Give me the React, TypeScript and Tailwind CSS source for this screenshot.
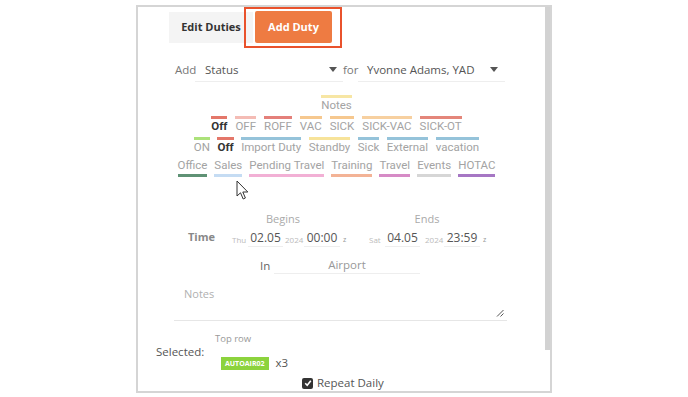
import React from "react";

type S = { label: string; bar: string; bold?: boolean };

const row1: S[] = [
  { label: "Off", bar: "#e4776a", bold: true },
  { label: "OFF", bar: "#f4bcb5" },
  { label: "ROFF", bar: "#e4807a" },
  { label: "VAC", bar: "#f6c88f" },
  { label: "SICK", bar: "#f6c88f" },
  { label: "SICK-VAC", bar: "#f7d0a0" },
  { label: "SICK-OT", bar: "#e4867a" },
];
const row2: S[] = [
  { label: "ON", bar: "#ace27a" },
  { label: "Off", bar: "#e4776a", bold: true },
  { label: "Import Duty", bar: "#95c3da" },
  { label: "Standby", bar: "#f7e39a" },
  { label: "Sick", bar: "#95c3da" },
  { label: "External", bar: "#95c3da" },
  { label: "vacation", bar: "#95c3da" },
];
const row3: S[] = [
  { label: "Office", bar: "#5f9275" },
  { label: "Sales", bar: "#c5dcf3" },
  { label: "Pending Travel", bar: "#f2b0d5" },
  { label: "Training", bar: "#f3b396" },
  { label: "Travel", bar: "#d68bc6" },
  { label: "Events", bar: "#d6d6d6" },
  { label: "HOTAC", bar: "#a677c4" },
];

const Item = ({ s, below }: { s: S; below?: boolean }) => (
  <div className="flex flex-col items-stretch">
    {!below && <div className="h-[3px]" style={{ background: s.bar }} />}
    <span
      className={`whitespace-nowrap leading-[14px] text-[11.5px] ${s.bold ? "font-bold text-[#333]" : "text-[#a3a3a3]"}`}
      style={{ fontFamily: "Roboto, sans-serif" }}
    >
      {s.label}
    </span>
    {below && <div className="h-[3px] mt-[2px]" style={{ background: s.bar }} />}
  </div>
);

const Caret = () => (
  <svg width="8" height="5" viewBox="0 0 8 5">
    <path d="M0 0 H8 L4 5 Z" fill="#555" />
  </svg>
);

export default function App() {
  return (
    <div
      className="relative w-[688px] h-[397px] bg-white overflow-hidden"
      style={{ fontFamily: '"Open Sans", sans-serif' }}
    >
      <div className="absolute left-[136px] top-[5px] w-[416px] h-[388px] border-2 border-[#d5d5d5] flex">
        <div className="flex-1 relative flex flex-col">
          {/* tabs */}
          <div className="flex items-end pl-[31px] pt-[4px] gap-[2px]">
            <div className="w-[84px] h-[31px] bg-[#f4f4f4] flex items-center justify-center text-[11px] font-bold text-[#333]">
              Edit Duties
            </div>
            <div className="w-[77px] h-[32px] bg-[#ee7b42] rounded-[2px] flex items-center justify-center text-[11px] font-bold text-white">
              Add Duty
            </div>
          </div>
          {/* Add row */}
          <div className="flex items-center mt-[15px] h-[24px] text-[11.5px] text-[#555]">
            <span className="ml-[37px] w-[20px] text-[#777]">Add</span>
            <div className="w-[148px] h-[24px] border-b border-[#eee] flex items-center justify-between pl-[10px] pr-[6px]">
              <span>Status</span>
              <Caret />
            </div>
            <span className="w-[15px] text-[#777]">for</span>
            <div className="w-[147px] h-[24px] border-b border-[#eee] flex items-center justify-between pl-[9px] pr-[7px]">
              <span>Yvonne Adams, YAD</span>
              <Caret />
            </div>
          </div>
          {/* statuses */}
          <div className="w-[397px] mt-[13px] flex flex-col items-center gap-[4px]">
            <Item s={{ label: "Notes", bar: "#f7e6a4" }} />
            <div className="flex gap-[8px]">
              {row1.map((s, i) => (
                <Item key={i} s={s} />
              ))}
            </div>
            <div className="flex gap-[7.5px]">
              {row2.map((s, i) => (
                <Item key={i} s={s} />
              ))}
            </div>
            <div className="flex gap-[7px]">
              {row3.map((s, i) => (
                <Item key={i} s={s} below />
              ))}
            </div>
          </div>
          {/* time headings */}
          <div className="flex mt-[34px] text-[11px] text-[#aaa] leading-[16px]">
            <span className="ml-[120px] w-[50px] text-center">Begins</span>
            <span className="ml-[94px] w-[50px] text-center">Ends</span>
          </div>
          <div className="flex items-end mt-[3px] h-[17px] text-[#555]">
            <span className="ml-[50px] w-[26px] mb-[3px] text-[11px] font-bold text-[#888] leading-[14px]">Time</span>
            <span className="ml-[18px] w-[14px] mb-[2px] text-[8px] text-[#bbb] leading-[10px]">Thu</span>
            <span className="ml-[2px] w-[35px] border-b border-[#eee] text-center text-[12px] leading-[16px]">02.05</span>
            <span className="ml-[2px] w-[19px] mb-[2px] text-[8px] text-[#bbb] leading-[10px]">2024</span>
            <span className="w-[36px] border-b border-[#eee] text-center text-[12px] leading-[16px]">00:00</span>
            <span className="ml-[3px] w-[6px] mb-[2px] text-[7px] text-[#999] leading-[10px]">z</span>
            <span className="ml-[20px] w-[15px] mb-[2px] text-[8px] text-[#bbb] leading-[10px]">Sat</span>
            <span className="ml-[1px] w-[35px] border-b border-[#eee] text-center text-[12px] leading-[16px]">04.05</span>
            <span className="ml-[5px] w-[19px] mb-[2px] text-[8px] text-[#bbb] leading-[10px]">2024</span>
            <span className="w-[36px] border-b border-[#eee] text-center text-[12px] leading-[16px]">23:59</span>
            <span className="ml-[3px] w-[6px] mb-[2px] text-[7px] text-[#999] leading-[10px]">z</span>
          </div>
          {/* In */}
          <div className="flex items-end mt-[10px] h-[17px] text-[11.5px] text-[#666]">
            <span className="ml-[122px] w-[11px] mb-[1px] leading-[15px]">In</span>
            <span className="ml-[3px] w-[146px] border-b border-[#eee] text-center text-[#999] leading-[16px]">Airport</span>
          </div>
          {/* Notes */}
          <div className="ml-[36px] w-[333px] mt-[7px] h-[40px] pt-[6px] border-b border-[#e6e6e6] relative">
            <span className="block ml-[10px] text-[11px] text-[#b0b0b0] leading-[14px]">Notes</span>
            <svg className="absolute right-[3px] bottom-[3px]" width="8" height="8" viewBox="0 0 8 8">
              <path d="M7.5 1 L1 7.5 M7.5 4.5 L4.5 7.5" stroke="#555" strokeWidth="1" />
            </svg>
          </div>
          {/* Selected */}
          <div className="flex mt-[12px]">
            <span className="ml-[18px] w-[47px] mt-[12px] text-[11.5px] text-[#555] leading-[14px]">Selected:</span>
            <div className="ml-[12px] flex flex-col">
              <span className="text-[9.5px] text-[#999] leading-[12px]">Top row</span>
              <div className="flex items-center mt-[11px] ml-[6px]">
                <span className="bg-[#8cd33d] text-white text-[7px] font-bold px-[4px] h-[13px] leading-[13px]">
                  AUTOAIR02
                </span>
                <span className="ml-[7px] text-[11.5px] text-[#555] leading-[14px]">x3</span>
              </div>
            </div>
          </div>
          <div className="flex items-center mt-[6px] ml-[164px]">
            <span className="w-[11px] h-[11px] rounded-[2px] bg-[#333] flex items-center justify-center">
              <svg width="8" height="8" viewBox="0 0 8 8">
                <path d="M1.2 4.2 L3.2 6.2 L6.8 1.8" stroke="white" strokeWidth="1.6" fill="none" />
              </svg>
            </span>
            <span className="ml-[4px] text-[11.5px] text-[#555] leading-[14px]">Repeat Daily</span>
          </div>
        </div>
        {/* scrollbar */}
        <div className="w-[5px] flex flex-col">
          <div className="h-[343px] bg-[#d2d2d2]" />
        </div>
      </div>
      {/* red highlight */}
      <div className="absolute left-[244px] top-[7px] w-[98px] h-[41px] border-2 border-[#e9522c]" />
      {/* cursor */}
      <svg className="absolute left-[236px] top-[180px]" width="14" height="21" viewBox="0 0 14 21">
        <path d="M1 1 L1 16 L4.5 12.8 L7.2 19 L9.4 18 L6.8 12 L11.8 12 Z" fill="white" stroke="#333" strokeWidth="1" strokeLinejoin="round" />
      </svg>
    </div>
  );
}
